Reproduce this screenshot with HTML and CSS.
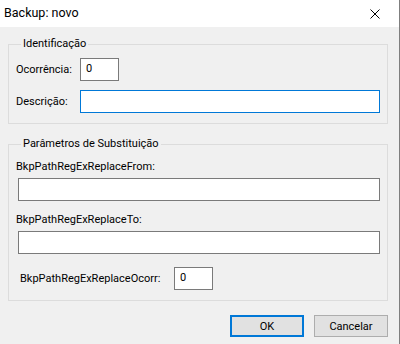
FILE: index.html
```html
<!DOCTYPE html>
<html lang="pt-BR">
<head>
    <meta charset="UTF-8">
    <meta name="viewport" content="width=device-width, initial-scale=1.0">
    <title>Backup: novo</title>
    <link rel="stylesheet" href="styles.css">
</head>
<body>
    <div class="dialog">
        <div class="title-bar">
            <span class="title">Backup: novo</span>
            <button class="close-btn" aria-label="Fechar">
                <svg width="10" height="10" viewBox="0 0 10 10">
                    <path d="M0.5 0.5 L9.5 9.5 M9.5 0.5 L0.5 9.5" stroke="#000" stroke-width="1" fill="none"/>
                </svg>
            </button>
        </div>

        <div class="dialog-body">
            <fieldset class="group group-ident">
                <legend>Identificação</legend>
                <div class="form-row">
                    <label class="label-inline">Ocorrência:</label>
                    <input type="text" class="field field-small" value="0">
                </div>
                <div class="form-row">
                    <label class="label-inline">Descrição:</label>
                    <input type="text" class="field field-wide focused" value="">
                </div>
            </fieldset>

            <fieldset class="group group-subst">
                <legend>Parâmetros de Substituição</legend>
                <label class="label-block">BkpPathRegExReplaceFrom:</label>
                <input type="text" class="field field-full" value="">
                <label class="label-block">BkpPathRegExReplaceTo:</label>
                <input type="text" class="field field-full" value="">
                <div class="form-row ocorr-row">
                    <label class="label-ocorr">BkpPathRegExReplaceOcorr:</label>
                    <input type="text" class="field field-small" value="0">
                </div>
            </fieldset>

            <div class="action-buttons">
                <button class="btn btn-default">OK</button>
                <button class="btn">Cancelar</button>
            </div>
        </div>
    </div>
</body>
</html>
```

FILE: styles.css
```css
* {
    margin: 0;
    padding: 0;
    box-sizing: border-box;
}

body {
    font-family: Roboto, "Noto Sans", sans-serif;
    font-size: 11px;
    color: #000;
    background-color: #f0f0f0;
    width: 400px;
    height: 344px;
    overflow: hidden;
}

.dialog {
    width: 400px;
    height: 344px;
    border-right: 1px solid #7f7f7f;
    background-color: #f0f0f0;
}

.title-bar {
    height: 27px;
    background-color: #fff;
    display: flex;
    align-items: center;
    justify-content: space-between;
    padding-left: 4px;
}

.title {
    font-size: 12.5px;
    line-height: 16px;
    margin-top: -1px;
}

.close-btn {
    width: 46px;
    height: 27px;
    border: none;
    background: transparent;
    display: flex;
    align-items: center;
    justify-content: center;
    margin-right: 1px;
}

.dialog-body {
    padding: 9px 11px 0 8px;
}

.group {
    border: 1px solid #dcdcdc;
    padding: 6px 7px 10px 7px;
    min-width: 0;
}

.group legend {
    margin-left: 5px;
    padding: 0 2px;
    line-height: 16px;
}

.form-row {
    display: flex;
    align-items: center;
}

.form-row + .form-row {
    margin-top: 9px;
}

.label-inline {
    width: 64px;
    flex-shrink: 0;
    line-height: 16px;
}

.field {
    height: 23px;
    border: 1px solid #7a7a7a;
    background-color: #fff;
    font-family: inherit;
    font-size: 11px;
    padding: 0 5px 3px;
    outline: none;
    color: #000;
}

.field.focused {
    border-color: #0078d7;
}

.field-small {
    width: 39px;
}

.field-wide {
    width: 300px;
}

.group-subst {
    margin-top: 12px;
    padding-top: 7px;
}

.label-block {
    display: block;
    line-height: 16px;
}

.field-full {
    display: block;
    width: 362px;
    margin: 3px 0 0 2px;
}

.field-full + .label-block {
    margin-top: 11px;
}

.ocorr-row {
    margin-top: 13px;
    padding-left: 4px;
}

.label-ocorr {
    width: 154px;
    flex-shrink: 0;
    line-height: 16px;
}

.action-buttons {
    display: flex;
    justify-content: flex-end;
    gap: 10px;
    margin-top: 14px;
}

.btn {
    width: 74px;
    height: 22px;
    border: 1px solid #adadad;
    background-color: #e1e1e1;
    font-family: inherit;
    font-size: 11px;
    color: #000;
}

.btn-default {
    border: 2px solid #0078d7;
}
```
